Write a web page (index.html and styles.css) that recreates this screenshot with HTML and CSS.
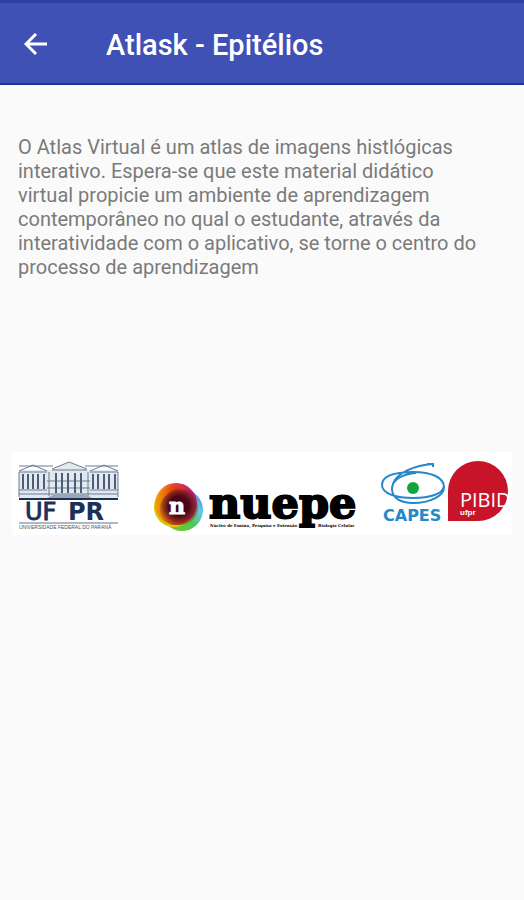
FILE: index.html
```html
<!DOCTYPE html>
<html lang="pt-BR">
<head>
    <meta charset="UTF-8">
    <meta name="viewport" content="width=device-width, initial-scale=1">
    <title>Atlask - Epitélios</title>
    <link rel="stylesheet" href="styles.css">
</head>
<body>
    <header class="topbar">
        <button class="back" type="button" aria-label="Voltar">
            <svg width="24" height="24" viewBox="0 0 24 24">
                <path d="M23 11H2M12 1L2 11l10 10" />
            </svg>
        </button>
        <h1>Atlask - Epitélios</h1>
    </header>

    <main>
        <p class="intro">O Atlas Virtual é um atlas de imagens histlógicas interativo. Espera-se que este material didático virtual propicie um ambiente de aprendizagem contemporâneo no qual o estudante, através da interatividade com o aplicativo, se torne o centro do processo de aprendizagem</p>

        <div class="logos">
            <!-- UFPR -->
            <svg class="ufpr" width="106" height="70" viewBox="0 0 106 70" role="img" aria-label="UFPR">
                <g fill="#e3e8ee">
                    <path d="M1 9h99v29H1z" />
                    <path d="M34 8L51 1l18 7v28H34z" />
                </g>
                <g fill="none" stroke="#6c7c91">
                    <path d="M1 5h34M67 5h33M1 10L15 4l14 6M72 10l14-6 14 6M34 8L51 1l18 7" />
                    <path d="M1 11h28M72 11h28M34 9h35M29 20h43M29 27h43M1 29h28M72 29h28M1 33h99" />
                    <path d="M31 11v24M70 11v24M1 11v25M100 11v25" />
                </g>
                <g fill="none" stroke="#4a5d7b" stroke-width="2">
                    <path d="M5 13v15M10 13v15M15 13v15M20 13v15M26 13v15" />
                    <path d="M75 13v15M80 13v15M86 13v15M91 13v15M97 13v15" />
                    <path d="M38 12v20M44 12v20M50 12v20M57 12v20M63 12v20" />
                </g>
                <path d="M29 37l8-4h30l7 4z" fill="#9ba7b5" />
                <path d="M1 38h99" stroke="#1b3158" stroke-width="2" />
                <text class="ufpr-thin" x="7" y="59">UF</text>
                <text class="ufpr-bold" x="50" y="59">PR</text>
                <path d="M1 62h99" stroke="#5f718a" />
                <text class="ufpr-name" x="1" y="68">UNIVERSIDADE FEDERAL DO PARANÁ</text>
            </svg>

            <!-- nuepe -->
            <svg class="nuepe" width="208" height="52" viewBox="0 0 208 52" role="img" aria-label="nuepe">
                <defs>
                    <linearGradient id="warm" x1="0" y1="0" x2="1" y2="0">
                        <stop offset="0" stop-color="#f5a300" />
                        <stop offset=".45" stop-color="#e22a12" />
                        <stop offset="1" stop-color="#b5006f" />
                    </linearGradient>
                    <linearGradient id="cool" x1="0" y1="1" x2="1" y2="0">
                        <stop offset="0" stop-color="#8fc31f" />
                        <stop offset=".45" stop-color="#4dc94e" />
                        <stop offset=".7" stop-color="#6bc5ee" />
                        <stop offset="1" stop-color="#4565c0" />
                    </linearGradient>
                    <radialGradient id="core">
                        <stop offset="0" stop-color="#35000f" />
                        <stop offset=".6" stop-color="#4e0718" />
                        <stop offset="1" stop-color="#6c1020" stop-opacity=".3" />
                    </radialGradient>
                </defs>
                <circle cx="33" cy="30" r="21" fill="url(#cool)" />
                <circle cx="25" cy="27" r="20" fill="#d6c900" />
                <circle cx="27" cy="24" r="21" fill="url(#warm)" opacity=".9" />
                <ellipse cx="30" cy="28" rx="19" ry="17" fill="#7b4615" opacity=".5" />
                <circle cx="30" cy="26" r="17" fill="url(#core)" />
                <text class="nuepe-n" x="20" y="34">n</text>
                <text class="nuepe-word" x="60" y="38">nuepe</text>
                <text class="nuepe-sub" x="61" y="47">Núcleo de Ensino, Pesquisa e Extensão</text>
                <text class="nuepe-sub" x="169" y="47">Biologia Celular</text>
            </svg>

            <div class="pair">
                <!-- CAPES -->
                <svg width="64" height="66" viewBox="0 0 64 66" role="img" aria-label="CAPES">
                    <path class="capes-eye" d="M52 3C38 4 12 10 11 28c0 9 9 14 21 14 17 0 31-7 31-16 0-10-14-15-30-15C14 11 1 15 1 24c0 9 15 13 31 13 17 0 30-4 31-12M11 27c1-9 11-14 24-15M46 3h6v3" />
                    <circle cx="32" cy="27" r="6" fill="#10a63d" />
                    <text class="capes-word" x="2" y="60">CAPES</text>
                </svg>
                <!-- PIBID -->
                <svg width="61" height="62" viewBox="0 0 61 62" role="img" aria-label="PIBID ufpr">
                    <path d="M0 60V30a30 30 0 1 1 30 30z" fill="#c81429" />
                    <text class="pibid-word" x="12" y="46">PIBID</text>
                    <text class="pibid-sub" x="12" y="54">ufpr</text>
                </svg>
            </div>
        </div>
    </main>
</body>
</html>
```
FILE: styles.css
```css
body{
    margin:0;
    min-height:100vh;
    background-color:#fafafa;
    font-family:Roboto, "Liberation Sans", sans-serif;
}

.topbar{
    box-sizing:border-box;
    height:85px;
    padding:4px 24px 0;
    display:flex;
    align-items:center;
    gap:58px;
    background-color:#3f51b5;
    border-top:3px solid #2f3f9f;
    border-bottom:2px solid #1e329b;
}

.back{
    width:24px;
    height:24px;
    padding:0;
    border:0;
    background:none;
    cursor:pointer;
}

.back svg{
    display:block;
    fill:none;
    stroke:#fff;
    stroke-width:3;
}

.topbar h1{
    margin:0;
    color:#fff;
    font-size:29px;
    font-weight:500;
    line-height:32px;
}

.intro{
    margin:50px 36px 0 18px;
    color:#7a7a7a;
    font-size:20px;
    line-height:24px;
}

.logos{
    margin:173px 12px 0;
    padding:9px 3px 3px 6px;
    display:flex;
    justify-content:space-between;
    align-items:flex-start;
    background-color:#fff;
}

.logos svg{
    overflow:visible;
}

.nuepe{
    margin-top:19px;
}

.pair{
    display:flex;
    gap:3px;
}

.ufpr-thin, .ufpr-bold{
    font-family:"DejaVu Sans", sans-serif;
    font-size:24px;
    fill:#1b3158;
}

.ufpr-thin{
    stroke:#1b3158;
    stroke-width:1;
}

.ufpr-bold{
    font-weight:bold;
}

.ufpr-name{
    font-family:"Liberation Sans", sans-serif;
    font-size:5px;
    fill:#41536e;
}

.nuepe-word, .nuepe-n, .nuepe-sub{
    font-family:"DejaVu Serif", serif;
    font-weight:bold;
}

.nuepe-word{
    font-size:43px;
    stroke:#000;
    stroke-width:2;
}

.nuepe-n{
    font-size:22px;
    fill:#fff;
    stroke:#fff;
    stroke-width:1;
}

.nuepe-sub{
    font-size:4px;
}

.capes-eye{
    fill:none;
    stroke:#2488ca;
    stroke-width:2;
}

.capes-word{
    font-family:"DejaVu Sans", sans-serif;
    font-size:16px;
    font-weight:bold;
    fill:#2488ca;
}

.pibid-word{
    font-family:"Open Sans", sans-serif;
    font-size:20px;
    fill:#fff;
}

.pibid-sub{
    font-family:"Liberation Sans", sans-serif;
    font-size:8px;
    font-weight:bold;
    fill:#fff;
}
```
